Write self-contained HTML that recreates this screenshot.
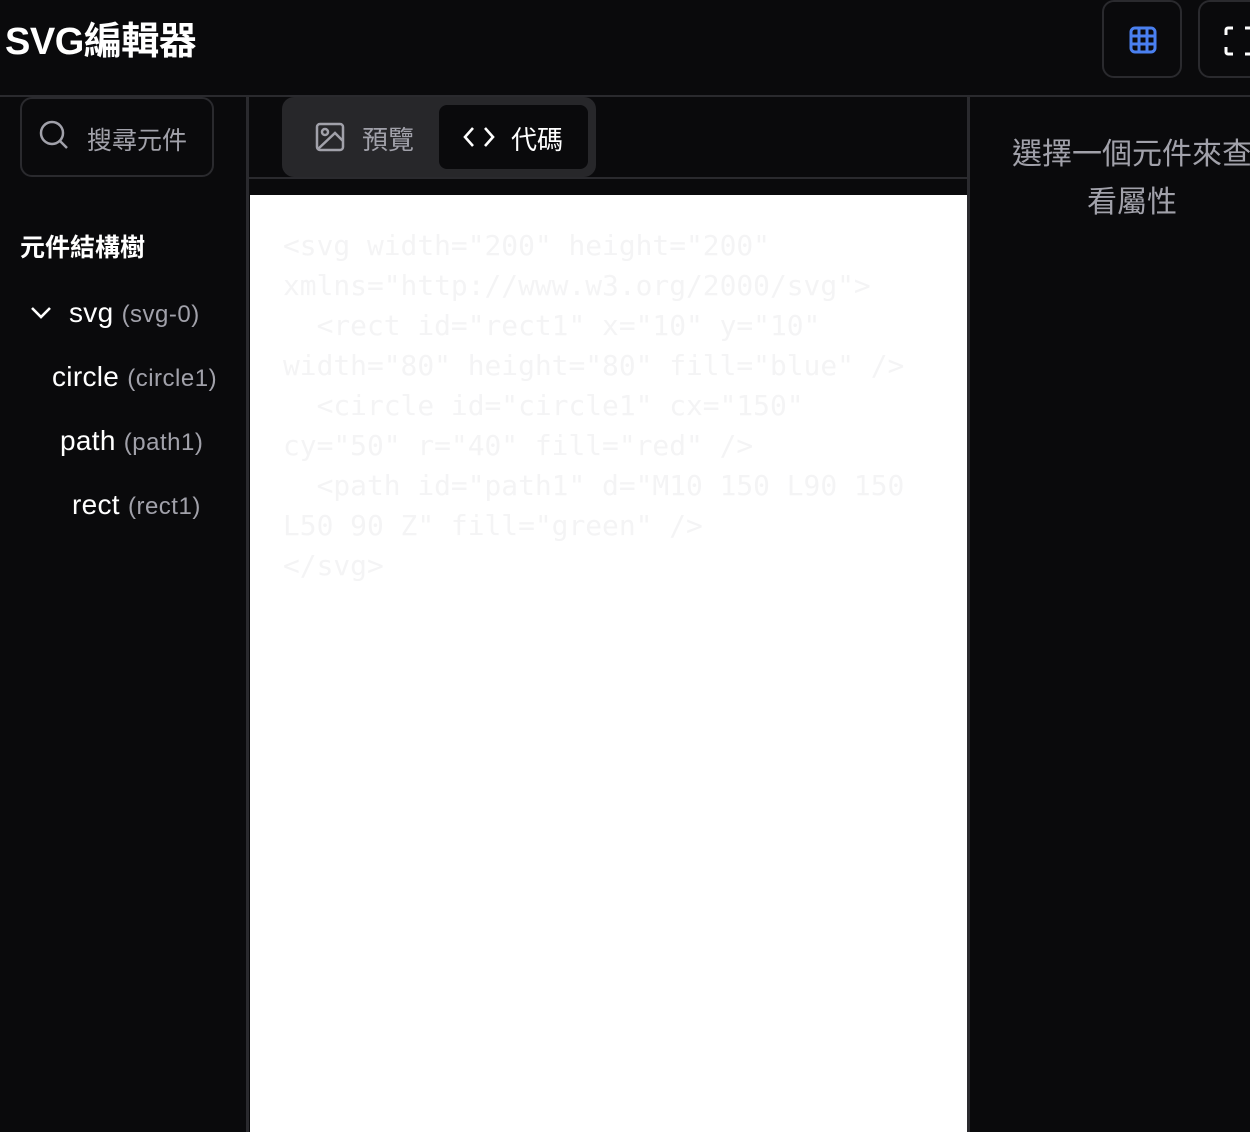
<!DOCTYPE html>
<html><head><meta charset="utf-8"><style>
*{margin:0;padding:0;box-sizing:border-box}
body{width:1250px;height:1132px;background:#0a0a0c;overflow:hidden;position:relative;font-family:"Liberation Sans","Noto Sans CJK TC",sans-serif;color:#fff}
.abs{position:absolute}
.title{left:5px;top:10px;font-size:38px;font-weight:bold;letter-spacing:-0.5px}
.hline{left:0;top:95px;width:1250px;height:2px;background:#2a2a2e}
.btn{top:0;width:80px;height:78px;border:2px solid #2a2a2e;border-radius:12px;background:#0a0a0c}
.vl{top:97px;width:3px;height:1035px;background:#2a2a2e}
.search{left:20px;top:97px;width:194px;height:80px;border:2px solid #2a2a2e;border-radius:12px}
.gray{color:#a1a1aa}
.tabs{left:282px;top:97px;width:314px;height:80px;background:#27272a;border-radius:12px}
.tabact{left:439px;top:105px;width:149px;height:64px;background:#0a0a0c;border-radius:8px}
.code{left:250px;top:195px;width:717px;height:937px;background:#fff}
pre{position:absolute;left:283px;top:226px;font-family:"DejaVu Sans Mono",monospace;font-size:27.9px;line-height:40px;color:#f4f4f5}
.node{font-size:28px;letter-spacing:0.3px}
.node span{font-size:24px;color:#a1a1aa;letter-spacing:0.5px}
</style></head><body>
<div class="abs title">SVG編輯器</div>
<div class="abs btn" style="left:1102px"><svg class="abs" style="left:25px;top:24px" width="28" height="28" viewBox="0 0 28 28" fill="none" stroke="#4a80f0" stroke-width="3"><rect x="2" y="2" width="24" height="24" rx="4"/><path d="M10 2v24M18 2v24M2 10h24M2 18h24"/></svg></div>
<div class="abs btn" style="left:1198px"><svg class="abs" style="left:24px;top:24px" width="30" height="30" viewBox="0 0 30 30" fill="none" stroke="#fff" stroke-width="3"><path d="M2 9V4a2 2 0 0 1 2-2h5M2 21v5a2 2 0 0 0 2 2h5M21 2h5a2 2 0 0 1 2 2v5M21 28h5a2 2 0 0 0 2-2v-5"/></svg></div>
<div class="abs hline"></div>
<div class="abs vl" style="left:246px"></div>
<div class="abs vl" style="left:967px"></div>
<div class="abs search"><svg class="abs" style="left:16px;top:20px" width="32" height="32" viewBox="0 0 32 32" fill="none" stroke="#a1a1aa" stroke-width="2.5"><circle cx="14" cy="14" r="11"/><path d="M22 22l7 7"/></svg><div class="abs gray" style="left:65px;top:22px;font-size:25px">搜尋元件</div></div>
<div class="abs" style="left:20px;top:228px;font-size:25px;font-weight:bold">元件結構樹</div>
<svg class="abs" style="left:30px;top:305px" width="22" height="16" viewBox="0 0 22 16" fill="none" stroke="#fff" stroke-width="2.6"><path d="M2 3l9 9 9-9"/></svg>
<div class="abs node" style="left:69px;top:297px">svg <span>(svg-0)</span></div>
<div class="abs node" style="left:52px;top:361px">circle <span>(circle1)</span></div>
<div class="abs node" style="left:60px;top:425px">path <span>(path1)</span></div>
<div class="abs node" style="left:72px;top:489px">rect <span>(rect1)</span></div>
<div class="abs" style="left:249px;top:177px;width:718px;height:2px;background:#2a2a2e"></div>
<div class="abs tabs"></div>
<div class="abs tabact"></div>
<svg class="abs" style="left:315px;top:122px" width="30" height="30" viewBox="0 0 30 30" fill="none" stroke="#a1a1aa" stroke-width="2.5"><rect x="2" y="2" width="26" height="26" rx="3"/><circle cx="10" cy="10" r="3"/><path d="M28 19l-8-8L3 27"/></svg>
<div class="abs gray" style="left:362px;top:120px;font-size:26px">預覽</div>
<svg class="abs" style="left:463px;top:126px" width="32" height="22" viewBox="0 0 32 22" fill="none" stroke="#fff" stroke-width="2.6"><path d="M10 2L2 11l8 9M22 2l8 9-8 9"/></svg>
<div class="abs" style="left:511px;top:120px;font-size:26px">代碼</div>
<div class="abs code"></div>
<pre>&lt;svg width="200" height="200"
xmlns="http://www.w3.org/2000/svg"&gt;
  &lt;rect id="rect1" x="10" y="10"
width="80" height="80" fill="blue" /&gt;
  &lt;circle id="circle1" cx="150"
cy="50" r="40" fill="red" /&gt;
  &lt;path id="path1" d="M10 150 L90 150
L50 90 Z" fill="green" /&gt;
&lt;/svg&gt;</pre>
<div class="abs gray" style="left:1012px;top:131px;font-size:30px;line-height:48px;white-space:nowrap">選擇一個元件來查</div>
<div class="abs gray" style="left:1087px;top:179px;font-size:30px;line-height:48px">看屬性</div>
</body></html>
